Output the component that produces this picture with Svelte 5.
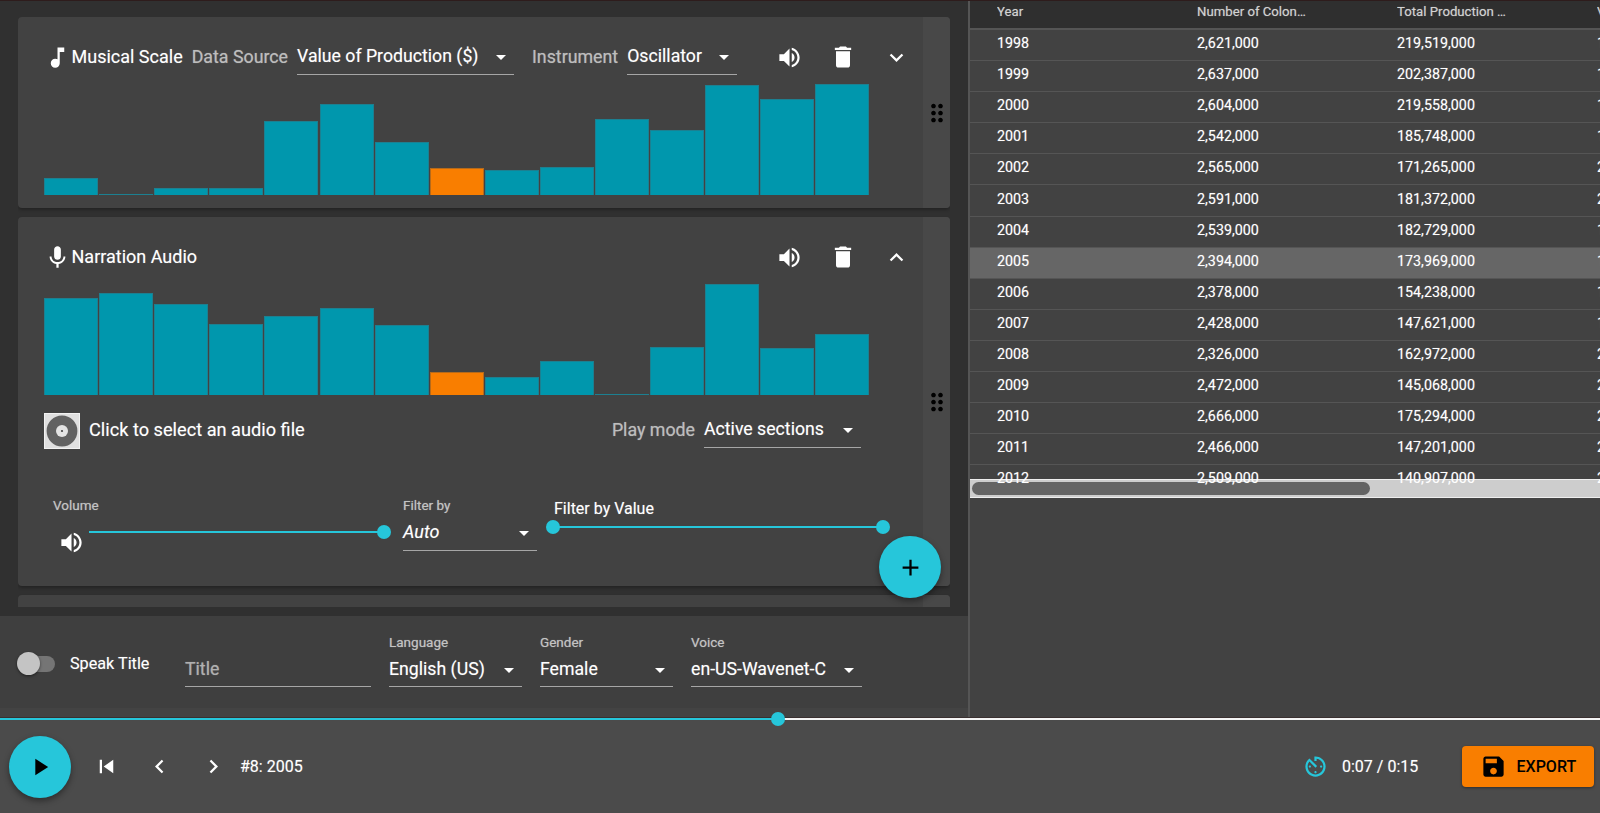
<script>
  const P = {
    note: 'M12 3v10.55c-.59-.34-1.27-.55-2-.55-2.21 0-4 1.79-4 4s1.79 4 4 4 4-1.79 4-4V7h4V3h-6z',
    mic: 'M12 14c1.66 0 2.99-1.34 2.99-3L15 5c0-1.66-1.34-3-3-3S9 3.34 9 5v6c0 1.66 1.34 3 3 3zm5.3-3c0 3-2.54 5.1-5.3 5.1S6.7 14 6.7 11H5c0 3.41 2.72 6.23 6 6.72V21h2v-3.28c3.28-.48 6-3.3 6-6.72h-1.7z',
    vol: 'M3 9v6h4l5 5V4L7 9H3zm13.5 3c0-1.77-1.02-3.29-2.5-4.03v8.05c1.48-.73 2.5-2.25 2.5-4.02zM14 3.23v2.06c2.89.86 5 3.54 5 6.71s-2.11 5.85-5 6.71v2.06c4.01-.91 7-4.49 7-8.77s-2.99-7.86-7-8.77z',
    del: 'M6 19c0 1.1.9 2 2 2h8c1.1 0 2-.9 2-2V7H6v12zM19 4h-3.5l-1-1h-5l-1 1H5v2h14V4z',
    more: 'M16.59 8.59L12 13.17 7.41 8.59 6 10l6 6 6-6z',
    less: 'M12 8l-6 6 1.41 1.41L12 10.83l4.59 4.58L18 14z',
    drag: 'M11 18c0 1.1-.9 2-2 2s-2-.9-2-2 .9-2 2-2 2 .9 2 2zm-2-8c-1.1 0-2 .9-2 2s.9 2 2 2 2-.9 2-2-.9-2-2-2zm0-6c-1.1 0-2 .9-2 2s.9 2 2 2 2-.9 2-2-.9-2-2-2zm6 4c1.1 0 2-.9 2-2s-.9-2-2-2-2 .9-2 2 .9 2 2 2zm0 2c-1.1 0-2 .9-2 2s.9 2 2 2 2-.9 2-2-.9-2-2-2zm0 6c-1.1 0-2 .9-2 2s.9 2 2 2 2-.9 2-2-.9-2-2-2z',
    add: 'M19 13h-6v6h-2v-6H5v-2h6V5h2v6h6v2z',
    play: 'M8 5v14l11-7z',
    skip: 'M6 6h2v12H6zm3.5 6l8.5 6V6z',
    left: 'M15.41 7.41L14 6l-6 6 6 6 1.41-1.41L10.83 12z',
    right: 'M10 6L8.59 7.41 13.17 12l-4.58 4.59L10 18l6-6z',
    timer: 'M11 17c0 .55.45 1 1 1s1-.45 1-1-.45-1-1-1-1 .45-1 1zm0-14v4h2V5.08c3.39.49 6 3.39 6 6.92 0 3.87-3.13 7-7 7s-7-3.13-7-7c0-1.68.59-3.22 1.58-4.42L12 13l1.41-1.41-6.8-6.8v.02C4.42 6.45 3 9.05 3 12c0 4.97 4.03 9 9 9 4.97 0 9-4.03 9-9s-4.03-9-9-9h-1zm7 9c0-.55-.45-1-1-1s-1 .45-1 1 .45 1 1 1 1-.45 1-1zM6 12c0 .55.45 1 1 1s1-.45 1-1-.45-1-1-1-1 .45-1 1z',
    save: 'M17 3H5c-1.11 0-2 .9-2 2v14c0 1.1.89 2 2 2h14c1.1 0 2-.9 2-2V7l-4-4zm-5 16c-1.66 0-3-1.34-3-3s1.34-3 3-3 3 1.34 3 3-1.34 3-3 3zm3-10H5V5h10v4z'
  };

  const scaleBars = [17, 1.5, 7, 7.5, 74, 91, 53, 27.5, 25, 28, 76, 65, 110, 96, 111];
  const narrBars = [96.7, 101.7, 91, 71, 78.7, 87, 70, 23.3, 18, 34, 1.3, 48.3, 111.3, 46.7, 60.7];
  const activeBar = 7;

  const rows = [
    ['1998', '2,621,000', '219,519,000', '143,000,000'],
    ['1999', '2,637,000', '202,387,000', '123,000,000'],
    ['2000', '2,604,000', '219,558,000', '131,000,000'],
    ['2001', '2,542,000', '185,748,000', '132,000,000'],
    ['2002', '2,565,000', '171,265,000', '226,000,000'],
    ['2003', '2,591,000', '181,372,000', '252,000,000'],
    ['2004', '2,539,000', '182,729,000', '168,000,000'],
    ['2005', '2,394,000', '173,969,000', '157,000,000'],
    ['2006', '2,378,000', '154,238,000', '157,000,000'],
    ['2007', '2,428,000', '147,621,000', '159,000,000'],
    ['2008', '2,326,000', '162,972,000', '230,000,000'],
    ['2009', '2,472,000', '145,068,000', '213,000,000'],
    ['2010', '2,666,000', '175,294,000', '283,000,000'],
    ['2011', '2,466,000', '147,201,000', '259,000,000'],
    ['2012', '2,509,000', '140,907,000', '280,000,000']
  ];
  const selectedYear = '2005';
</script>

{#snippet icon(d, cls = '')}
  <svg class="icon {cls}" viewBox="0 0 24 24" aria-hidden="true"><path {d} /></svg>
{/snippet}

{#snippet select(value, cls = '')}
  <div class="select {cls}"><span>{value}</span><i class="arrow"></i></div>
{/snippet}

{#snippet chart(values)}
  <div class="chart">
    {#each values as h, i}
      <div class="bar" class:active={i === activeBar} style="height:{h}px"></div>
    {/each}
  </div>
{/snippet}

{#snippet actions(chev)}
  <div class="actions">
    {@render icon(P.vol)}
    {@render icon(P.del, 'trash')}
    {@render icon(chev)}
  </div>
{/snippet}

<div class="root">
  <div class="main">
    <section class="left">
      <div class="stage">
        <div class="cards">
          <article class="card one">
            <div class="card-main">
              <header class="head">
                {@render icon(P.note, 'lead')}
                <span class="title">Musical Scale</span>
                <span class="muted ds">Data Source</span>
                {@render select('Value of Production ($)', 'w-value')}
                <span class="muted inst">Instrument</span>
                {@render select('Oscillator', 'w-osc')}
                {@render actions(P.more)}
              </header>
              {@render chart(scaleBars)}
            </div>
            <div class="handle">{@render icon(P.drag, 'dots')}</div>
          </article>

          <article class="card two">
            <div class="card-main">
              <header class="head">
                {@render icon(P.mic, 'lead')}
                <span class="title">Narration Audio</span>
                {@render actions(P.less)}
              </header>
              {@render chart(narrBars)}
              <div class="audio">
                <svg class="album" viewBox="0 0 36 36" aria-hidden="true">
                  <rect x="0.5" y="0.5" width="35" height="35" fill="#e0e0e0" stroke="#f2f2f2" />
                  <circle cx="18" cy="18" r="15.4" fill="#626262" />
                  <circle cx="18" cy="18" r="6" fill="#e4e4e4" />
                  <circle cx="18" cy="18" r="1.1" fill="#444" />
                </svg>
                <span class="file">Click to select an audio file</span>
                <span class="muted pm">Play mode</span>
                {@render select('Active sections', 'w-active')}
              </div>
              <div class="filters">
                <div class="f-vol">
                  <div class="label">Volume</div>
                  <div class="vol-body">
                    {@render icon(P.vol, 'small-vol')}
                    <div class="slider vol-slider"><div class="track"></div><div class="knob end"></div></div>
                  </div>
                </div>
                <div class="f-by">
                  <div class="label">Filter by</div>
                  {@render select('Auto', 'w-auto')}
                </div>
                <div class="f-val">
                  <div class="val-label">Filter by Value</div>
                  <div class="slider val-slider"><div class="track"></div><div class="knob start"></div><div class="knob end"></div></div>
                </div>
              </div>
            </div>
            <div class="handle">{@render icon(P.drag, 'dots')}</div>
          </article>

          <article class="card three"><div class="card-main"></div><div class="handle"></div></article>
        </div>
      </div>

      <button class="fab add" aria-label="Add">{@render icon(P.add)}</button>

      <div class="foot">
        <div class="toggle"><div class="t-track"></div><div class="t-thumb"></div></div>
        <span class="speak">Speak Title</span>
        <div class="select w-title placeholder"><span>Title</span></div>
        <div class="field">
          <div class="label">Language</div>
          {@render select('English (US)', 'w-lang')}
        </div>
        <div class="field">
          <div class="label">Gender</div>
          {@render select('Female', 'w-lang')}
        </div>
        <div class="field">
          <div class="label">Voice</div>
          {@render select('en-US-Wavenet-C', 'w-voice')}
        </div>
      </div>
    </section>

    <section class="right">
      <div class="table">
        <div class="scroll">
          <div class="tr th">
            <div class="cell"><span class="clip">Year</span></div>
            <div class="cell"><span class="clip">Number of Colonies</span></div>
            <div class="cell"><span class="clip">Total Production (lbs)</span></div>
            <div class="cell"><span class="clip">Value of Production</span></div>
          </div>
          {#each rows as r}
            <div class="tr" class:sel={r[0] === selectedYear}>
              {#each r as c}<div class="cell">{c}</div>{/each}
            </div>
          {/each}
        </div>
        <div class="hbar"><div class="hthumb"></div></div>
        <div class="edge"></div>
      </div>
    </section>
  </div>

  <div class="seek">
    <div class="seek-done"></div>
    <div class="seek-rest"></div>
    <div class="seek-knob"></div>
  </div>

  <footer class="bar-bottom">
    <button class="fab playbtn" aria-label="Play">{@render icon(P.play)}</button>
    {@render icon(P.skip, 'skip')}
    {@render icon(P.left, 'nav')}
    {@render icon(P.right, 'nav')}
    <span class="now">#8: 2005</span>
    {@render icon(P.timer, 'timer')}
    <span class="time">0:07 / 0:15</span>
    <button class="export">{@render icon(P.save, 'save')}<span>EXPORT</span></button>
  </footer>
</div>

<style>
  :global(body) { margin: 0; background: #4b4b4b; }
  .root {
    width: 1600px; height: 813px; overflow: hidden; position: relative;
    font-family: Roboto, "Liberation Sans", sans-serif; color: #fff;
    font-size: 18px;
    text-shadow: 0 0 1px rgba(255, 255, 255, .4);
  }
  .main { display: flex; height: 717px; box-sizing: border-box; border-top: 1px solid #2e1c1c; }
  .icon { width: 27px; height: 27px; fill: currentColor; display: block; flex: none; }

  .left { width: 968px; flex: none; position: relative; background: #434343; }
  .stage { height: 615px; background: #303030; padding: 16px 18px 0; box-sizing: border-box; }
  .cards { height: 590px; overflow: hidden; display: flex; flex-direction: column; gap: 9px; }
  .card { display: flex; flex: none; background: #424242; border-radius: 4px; overflow: hidden; box-shadow: 0 2px 3px rgba(0,0,0,.25); }
  .one { height: 191px; }
  .two { height: 369px; }
  .three { height: 60px; }
  .card-main { flex: 1; min-width: 0; padding: 24px 13px 0 26px; }
  .handle { width: 27px; flex: none; background: #484848; display: flex; align-items: center; justify-content: center; }
  .dots { width: 28px; height: 28px; fill: #000; }

  .head { display: flex; align-items: center; height: 34px; }
  .lead { margin: 0 0 2px 0; }
  .title { margin: 0 0 3px .5px; }
  .muted { color: #bdbdbd; font-size: 17.8px; margin-bottom: 3px; }
  .ds { margin-left: 9px; }
  .inst { margin-left: 18px; }
  .ds + :global(.select), .inst + :global(.select), .pm + :global(.select) { margin-left: 9px; }
  .actions { margin: 0 0 2px auto; display: flex; gap: 26px; }
  .trash { width: 28px; height: 28px; margin-top: -1px; }

  .select {
    display: flex; align-items: center; justify-content: space-between;
    height: 34px; box-sizing: border-box; border-bottom: 1.5px solid #a6a6a6;
    font-size: 17.7px; white-space: nowrap; flex: none;
    padding-bottom: 3px;
  }
  .arrow { width: 0; height: 0; border: 5.5px solid transparent; border-top: 5.5px solid #fff; border-bottom: 0; margin-right: 8px; margin-top: 3px; }
  .w-value { width: 217px; }
  .w-osc { width: 110px; }
  .w-active { width: 157px; }
  .w-auto { width: 134px; font-style: italic; margin-top: 3.5px; font-size: 18px; }
  .w-lang { width: 133px; padding-bottom: 2px; }
  .w-voice { width: 171px; padding-bottom: 2px; }
  .w-title { width: 186px; margin: 19px 18px 0 0; padding-bottom: 2px; }
  .placeholder { color: #b0b0b0; }

  .chart { display: flex; align-items: flex-end; height: 112px; margin: 8px 0 0 .3px; width: 826px; }
  .bar { flex: 0 0 54px; margin-right: 1.05px; box-sizing: border-box; background: #0097ad; border: 1px solid #1c8091; border-bottom-width: 0; }
  .bar.active { background: #f97e00; border-color: #b66a1a; }

  .audio { display: flex; align-items: center; height: 36px; margin-top: 18px; margin-right: 49px; }
  .album { width: 36px; height: 36px; flex: none; }
  .file { margin: 0 0 3px 9px; font-size: 18.2px; }
  .pm { margin-left: auto; }

  .filters { display: flex; align-items: flex-start; margin-top: 48px; padding-left: 9px; }
  .label { font-size: 13.5px; line-height: 16px; color: #c4c4c4; }
  .f-vol { width: 350px; flex: none; }
  .vol-body { display: flex; align-items: flex-start; }
  .small-vol { margin: 16px 0 0 4.5px; }
  .f-by { width: 134px; flex: none; }
  .f-val { margin-left: 16px; }
  .val-label { font-size: 16px; line-height: 20px; margin-top: 2px; margin-left: 1px; color: #fff; }

  .slider { position: relative; height: 14px; }
  .track { position: absolute; left: 0; right: 0; top: 6px; height: 2px; background: #26c6da; }
  .knob { position: absolute; top: 0; width: 14px; height: 14px; border-radius: 50%; background: #26c6da; }
  .knob.end { right: -7px; }
  .knob.start { left: -7px; }
  .vol-slider { width: 295px; margin: 12px 0 0 4.5px; }
  .val-slider { width: 330px; margin-top: 1px; }

  .fab { border: 0; padding: 0; border-radius: 50%; background: #26c6da; color: #000; width: 62px; height: 62px; display: flex; align-items: center; justify-content: center; box-shadow: 0 3px 6px rgba(0,0,0,.4); flex: none; }
  .add { position: absolute; left: 879px; top: 535px; }

  .foot { height: 92px; background: #3f3f3f; box-sizing: border-box; padding: 18px 0 0 17px; display: flex; align-items: flex-start; }
  .toggle { position: relative; width: 38px; height: 24px; margin-top: 18px; flex: none; }
  .t-track { position: absolute; left: 6px; right: 0; top: 4px; height: 16px; border-radius: 8px; background: #757575; }
  .t-thumb { position: absolute; left: 0; top: 0; width: 23px; height: 23px; border-radius: 50%; background: #c4c4c4; box-shadow: 0 1px 3px rgba(0,0,0,.5); }
  .speak { font-size: 16.2px; line-height: 20px; margin: 20px 0 0 15px; width: 115px; flex: none; color: #fff; }
  .field { margin-right: 18px; flex: none; }
  .field .label { margin-bottom: 3px; }

  .right { flex: 1; min-width: 0; background: #424242; border-left: 2px solid #555; overflow: hidden; }
  .table { position: relative; height: 497px; }
  .scroll { position: relative; z-index: 1; height: 485px; overflow: hidden; }
  .tr { display: flex; height: 31.1px; box-sizing: border-box; padding: 0 0 4px 27px; align-items: center; border-bottom: 1.5px solid #555; font-size: 14.3px; white-space: nowrap; }
  .cell { flex: 0 0 200px; }
  .th { height: 29px; background: #2f2f2f; border-bottom: 2px solid #555; color: #d2d2d2; font-size: 13.2px; padding-bottom: 6px; }
  .clip { display: block; max-width: 110px; overflow: hidden; text-overflow: ellipsis; }
  .sel { background: #666; }
  .hbar { position: absolute; left: 0; right: 0; top: 478px; height: 19px; box-sizing: border-box; background: #cdcdcd; border-top: 1px solid #eee; border-bottom: 1px solid #eee; padding: 2px 0 0 2px; }
  .hthumb { width: 398px; height: 13px; border-radius: 7px; background: #646464; }
  .edge { position: absolute; left: -1px; top: 0; width: 1px; height: 29px; background: #ddd; z-index: 2; }

  .seek { position: relative; height: 3px; box-sizing: border-box; border-top: 1px solid #3a3030; display: flex; background: #4b4b4b; }
  .seek-done { width: 778px; background: #26c6da; }
  .seek-rest { flex: 1; background: #f4f4f4; }
  .seek-knob { position: absolute; left: 771px; top: -6px; width: 14px; height: 14px; border-radius: 50%; background: #26c6da; }

  .bar-bottom { height: 93px; background: #4b4b4b; display: flex; align-items: center; padding-left: 9px; }
  .playbtn :global(.icon) { width: 28px; height: 28px; }
  .skip { margin-left: 21.5px; }
  .nav { margin-left: 26.5px; }
  .now { font-size: 16px; margin-left: 13.5px; }
  .timer { color: #26c6da; margin: 0 0 0 auto; }
  .time { font-size: 16px; margin-left: 13.5px; width: 76px; white-space: nowrap; }
  .export {
    margin: 0 6px 0 44px; width: 132px; height: 41px; border: 0; border-radius: 4px; background: #f97e00; color: #000;
    display: flex; align-items: center; padding: 0 0 0 18px; font: 500 16px Roboto, sans-serif;
    text-shadow: none;
    box-shadow: 0 1px 3px rgba(0,0,0,.4);
  }
  .save { margin-right: 9.5px; }
</style>
